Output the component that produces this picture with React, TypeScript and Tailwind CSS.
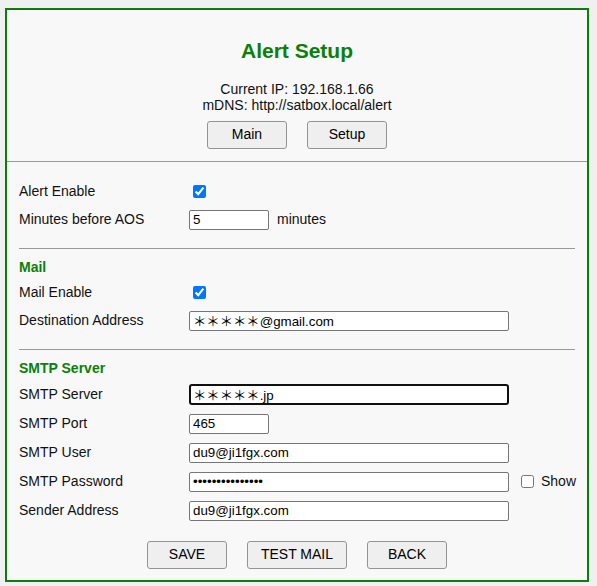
import React from 'react';

const font = { fontFamily: '"Liberation Sans", Arial, "Noto Sans CJK JP", sans-serif' };

const Row = ({ label, children, h = 'h-[29px]' }: { label: string; children: React.ReactNode; h?: string }) => (
  <div className={`flex items-center ${h}`}>
    <div className="w-[170px] shrink-0">{label}</div>
    <div className="flex items-center">{children}</div>
  </div>
);

const inputBase =
  'h-[20px] bg-white border border-[#767676] rounded-[2px] pl-[3px] pr-[2px] text-[13.33px] text-black outline-none';

const Btn = ({ children, w = 'w-[80px]' }: { children: React.ReactNode; w?: string }) => (
  <button
    type="button"
    className={`${w} h-[28px] pb-[1px] bg-[#efefef] border border-[#949494] rounded-[3px] text-[14px] text-black`}
  >
    {children}
  </button>
);

const Check = ({ checked }: { checked: boolean }) => (
  <input type="checkbox" defaultChecked={checked} className="ml-[4px] w-[13px] h-[13px] m-0" />
);

export default function App() {
  return (
    <div className="min-h-screen bg-[#f0f0f0] pt-[8px] pl-[5px] pr-[8px] pb-[5px] text-[14px] text-[#111]" style={font}>
      <div className="border-2 border-[#0f7a0f] bg-[#f8f8f8]">
        {/* header */}
        <div className="border-b border-[#999] pt-[29px] pb-[12px] flex flex-col items-center">
          <h2 className="text-[21px] leading-[24px] font-bold text-[#0a800a]">Alert Setup</h2>
          <div className="mt-[18px] leading-[16px] text-center">
            <div>Current IP: 192.168.1.66</div>
            <div>mDNS: http://satbox.local/alert</div>
          </div>
          <div className="mt-[8px] flex gap-[20px]">
            <Btn>Main</Btn>
            <Btn>Setup</Btn>
          </div>
        </div>

        <div className="px-[12px] pt-[16px] pb-[11px]">
          <Row label="Alert Enable" h="h-[27px]">
            <Check checked />
          </Row>
          <Row label="Minutes before AOS">
            <input className={`${inputBase} w-[80px]`} defaultValue="5" />
            <span className="ml-[8px]">minutes</span>
          </Row>

          <hr className="mt-[14px] border-t border-[#999]" />
          <div className="mt-[8px] h-[20px] flex items-center font-bold text-[#0a800a]">Mail</div>
          <div className="mt-[2px]">
            <Row label="Mail Enable" h="h-[27px]">
              <Check checked />
            </Row>
            <Row label="Destination Address">
              <input className={`${inputBase} w-[320px]`} defaultValue="＊＊＊＊＊@gmail.com" style={font} />
            </Row>
          </div>

          <hr className="mt-[14px] border-t border-[#999]" />
          <div className="mt-[8px] h-[20px] flex items-center font-bold text-[#0a800a]">SMTP Server</div>
          <div className="mt-[2px]">
            <Row label="SMTP Server">
              <input
                className="h-[21px] w-[320px] bg-white border-2 border-[#101010] rounded-[3px] pl-[2px] pr-[2px] text-[13.33px] text-black outline-none"
                defaultValue="＊＊＊＊＊.jp"
                style={font}
              />
            </Row>
            <Row label="SMTP Port">
              <input className={`${inputBase} w-[80px]`} defaultValue="465" />
            </Row>
            <Row label="SMTP User">
              <input className={`${inputBase} w-[320px]`} defaultValue="du9@ji1fgx.com" />
            </Row>
            <Row label="SMTP Password">
              <input type="password" className={`${inputBase} w-[320px]`} defaultValue="abcdefghijklmno" />
              <input type="checkbox" className="ml-[12px] w-[13px] h-[13px] m-0" />
              <span className="ml-[7px]">Show</span>
            </Row>
            <Row label="Sender Address">
              <input className={`${inputBase} w-[320px]`} defaultValue="du9@ji1fgx.com" />
            </Row>
          </div>

          <div className="mt-[16px] flex justify-center gap-[20px]">
            <Btn>SAVE</Btn>
            <Btn w="w-[100px]">TEST MAIL</Btn>
            <Btn>BACK</Btn>
          </div>
        </div>
      </div>
    </div>
  );
}
